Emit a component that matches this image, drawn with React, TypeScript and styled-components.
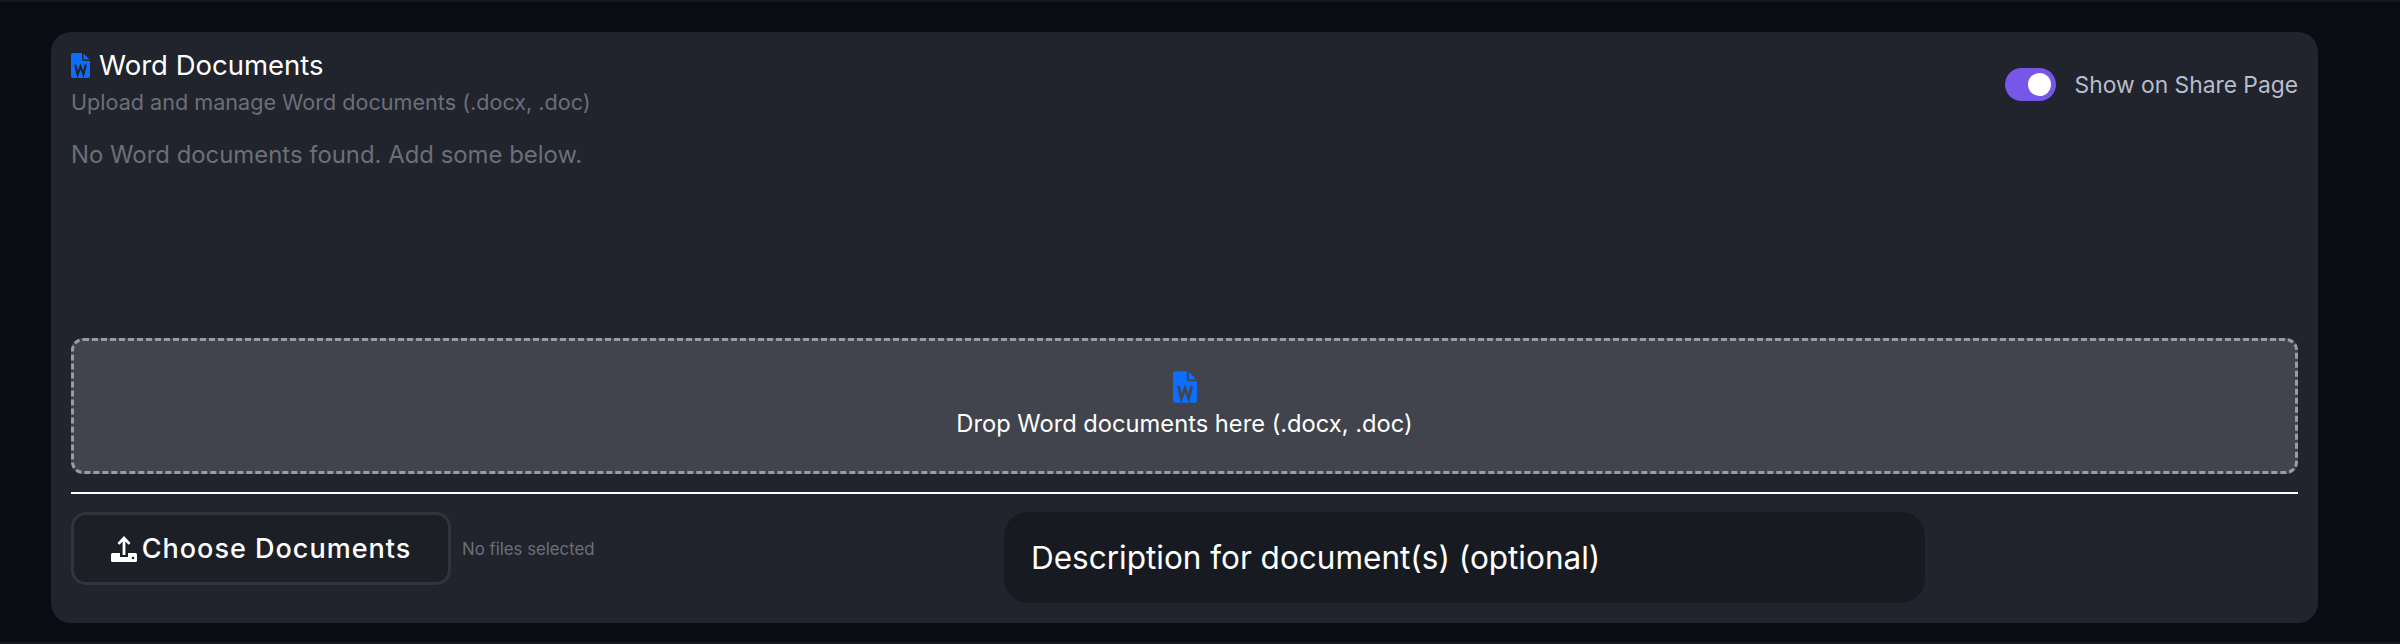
import React from "react";
import styled, { createGlobalStyle } from "styled-components";

const Global = createGlobalStyle`
  html, body { margin: 0; padding: 0; background: #0b0b14; }
  body { font-family: Inter, "Liberation Sans", sans-serif; }
`;

const Page = styled.div`
  width: 2400px;
  height: 644px;
  box-sizing: border-box;
  padding: 30px 82px 21px 51px;
  background: #0b0b14;
  border-top: 2px solid #16161e;
  border-bottom: 2px solid #16161e;
  overflow: hidden;
`;

const Card = styled.section`
  box-sizing: border-box;
  height: 591px;
  padding: 19px 20px 20px 20px;
  background: #21242c;
  border-radius: 20px;
  display: flex;
  flex-direction: column;
`;

const Header = styled.header`
  display: flex;
  justify-content: space-between;
  align-items: center;
  height: 67px;
`;

const TitleBlock = styled.div`
  align-self: flex-start;
  display: flex;
  flex-direction: column;
  gap: 9px;
`;

const Title = styled.h2`
  margin: 0;
  display: flex;
  align-items: center;
  gap: 9px;
  font-size: 27.5px;
  line-height: 28px;
  font-weight: 400;
  color: #ffffff;
`;

const Subtitle = styled.p`
  margin: 0;
  font-size: 21.6px;
  line-height: 28px;
  color: #6b6f79;
`;

const ToggleWrap = styled.div`
  display: flex;
  align-items: center;
  gap: 19px;
`;

const Track = styled.div`
  position: relative;
  width: 51px;
  height: 33px;
  border-radius: 17px;
  background: #7657e8;
`;

const Knob = styled.span`
  position: absolute;
  top: 5px;
  right: 5px;
  width: 23px;
  height: 23px;
  border-radius: 50%;
  background: #ffffff;
`;

const ToggleLabel = styled.span`
  font-size: 22.8px;
  color: #b9bccb;
`;

const Empty = styled.p`
  margin: 24px 0 0;
  font-size: 23.9px;
  line-height: 28px;
  color: #6b6f79;
  flex: 0 0 197px;
`;

const Drop = styled.div`
  box-sizing: border-box;
  height: 137px;
  border: 3px dashed #9a9ca2;
  border-radius: 12px;
  background: #41444c;
  display: flex;
  flex-direction: column;
  align-items: center;
  padding-top: 30px;
  color: #fff;
  font-size: 23.7px;
`;

const DropText = styled.span`
  margin-top: 6px;
  line-height: 30px;
`;

const Divider = styled.hr`
  margin: 18px 0 18px;
  border: 0;
  height: 2px;
  background: #ffffff;
`;

const Bottom = styled.div`
  display: flex;
  align-items: flex-start;
`;

const FileGroup = styled.div`
  flex: 0 0 933px;
  display: flex;
  align-items: center;
  gap: 11px;
  height: 73px;
`;

const ChooseButton = styled.button`
  box-sizing: border-box;
  width: 380px;
  height: 73px;
  border: 3px solid #31343c;
  border-radius: 15px;
  background: #1c1f26;
  color: #fff;
  font-family: inherit;
  font-size: 27px;
  font-weight: 500;
  letter-spacing: 1px;
  display: flex;
  align-items: center;
  justify-content: center;
  gap: 5px;
`;

const FileHint = styled.span`
  font-size: 16.8px;
  color: #6b6f79;
`;

const Description = styled.div`
  box-sizing: border-box;
  width: 921px;
  height: 91px;
  padding-left: 27px;
  border-radius: 24px;
  background: #171b21;
  color: #fff;
  font-size: 31.5px;
  display: flex;
  align-items: center;
`;

const WordIcon = ({ w, h, cut }: { w: number; h: number; cut: string }) => (
  <svg width={w} height={h} viewBox="0 0 19 25" aria-hidden="true">
    <path d="M2 0H11V6.5a1.5 1.5 0 0 0 1.5 1.5H19V23a2 2 0 0 1-2 2H2a2 2 0 0 1-2-2V2a2 2 0 0 1 2-2Z" fill="#0d6efd" />
    <path d="M12.5 0.5 18.5 6.5H12.5Z" fill="#0d6efd" />
    <path d="M4.2 11.5 6.6 21.5 9.5 13.5 12.4 21.5 14.8 11.5" fill="none" stroke={cut} strokeWidth="2.2" />
  </svg>
);

const UploadIcon = () => (
  <svg width="26" height="26" viewBox="0 0 26 26" aria-hidden="true">
    <path d="M13 0 19.5 7 17.6 8.8 14.4 5.4V19H11.6V5.4L8.4 8.8 6.5 7Z" fill="#fff" />
    <path d="M1.5 17H9V21H17V17H24.5A1.5 1.5 0 0 1 26 18.5V24.5A1.5 1.5 0 0 1 24.5 26H1.5A1.5 1.5 0 0 1 0 24.5V18.5A1.5 1.5 0 0 1 1.5 17Z" fill="#fff" />
    <circle cx="22" cy="22" r="1.3" fill="#1c1f26" />
  </svg>
);

export default function App() {
  return (
    <>
      <Global />
      <Page>
        <Card>
          <Header>
            <TitleBlock>
              <Title>
                <WordIcon w={19} h={25} cut="#21242c" />
                Word Documents
              </Title>
              <Subtitle>Upload and manage Word documents (.docx, .doc)</Subtitle>
            </TitleBlock>
            <ToggleWrap>
              <Track>
                <Knob />
              </Track>
              <ToggleLabel>Show on Share Page</ToggleLabel>
            </ToggleWrap>
          </Header>
          <Empty>No Word documents found. Add some below.</Empty>
          <Drop>
            <WordIcon w={24} h={32} cut="#41444c" />
            <DropText>Drop Word documents here (.docx, .doc)</DropText>
          </Drop>
          <Divider />
          <Bottom>
            <FileGroup>
              <ChooseButton>
                <UploadIcon />
                Choose Documents
              </ChooseButton>
              <FileHint>No files selected</FileHint>
            </FileGroup>
            <Description>Description for document(s) (optional)</Description>
          </Bottom>
        </Card>
      </Page>
    </>
  );
}
